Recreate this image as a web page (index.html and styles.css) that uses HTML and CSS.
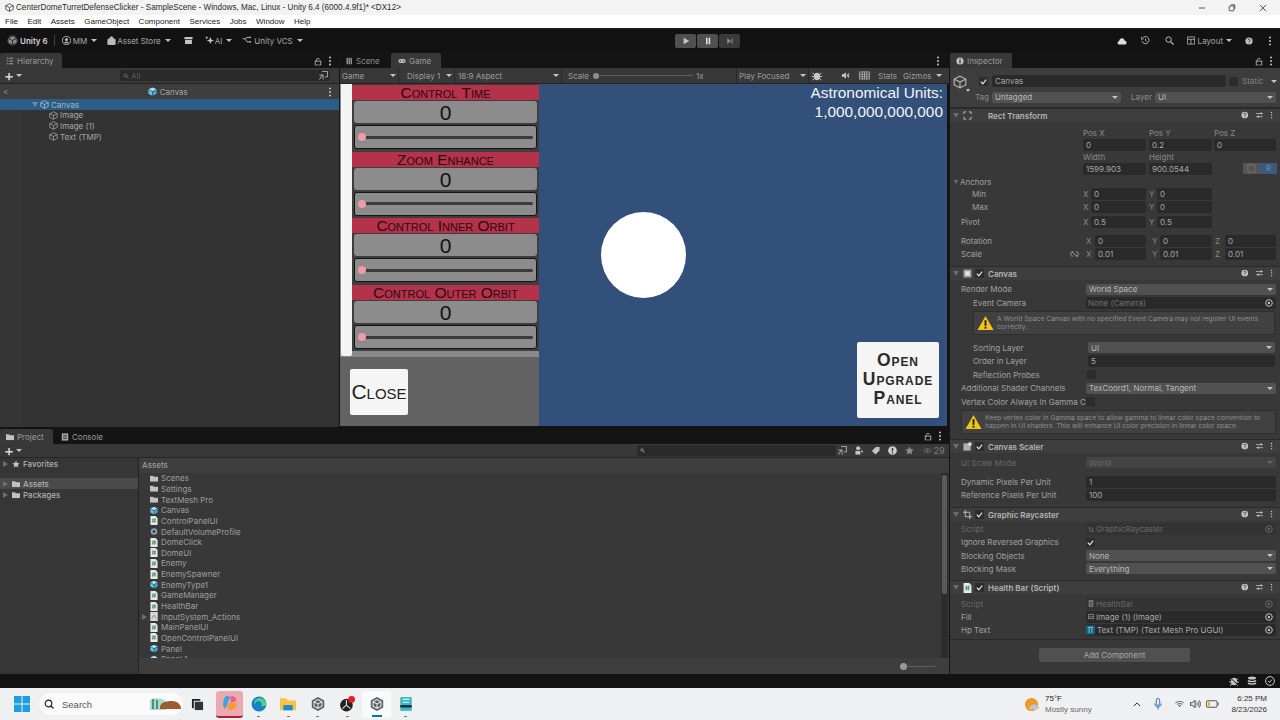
FILE: index.html
```html
<!DOCTYPE html>
<html>
<head>
    <meta charset="UTF-8">
    <title>CenterDomeTurretDefenseClicker - SampleScene</title>
    <link rel="stylesheet" href="styles.css">
</head>
<body>
    <svg class="defs" width="0" height="0">
        <defs>
            <symbol id="cube" viewBox="0 0 12 12"><path d="M6 1 11 3.500V8.500L6 11 1 8.500V3.500ZM1 3.500 6 6 11 3.500M6 6V11" fill="none" stroke="currentColor" stroke-width="1"/></symbol>
            <symbol id="prefab" viewBox="0 0 12 12"><path d="M6 .5 11.500 3 6 5.600.5 3Z" fill="#a8e0f5"/><path d="M.5 3.800 5.600 6.300V11.700L.5 9Z" fill="#5fc3e8"/><path d="M11.500 3.800 6.400 6.300V11.700L11.500 9Z" fill="#3ba7d2"/></symbol>
            <symbol id="folder" viewBox="0 0 12 10"><path d="M0 1h4.500l1 1.500H12V10H0Z" fill="#c2c2c2"/></symbol>
            <symbol id="script" viewBox="0 0 10 12"><path d="M0 0H7L10 3V12H0Z" fill="#e8e8e8"/><path d="M4 3 3.300 9M6.600 3 6 9M2.400 5H7.600M2.200 7H7.400" stroke="#3f8a55" stroke-width="1" fill="none"/></symbol>
            <symbol id="help" viewBox="0 0 10 10"><circle cx="5" cy="5" r="4.500" fill="#c4c4c4"/><path d="M3.400 4C3.400 2 6.800 2.200 6.600 4 6.500 5 5 5 5 6.300" fill="none" stroke="#333" stroke-width="1.100"/><rect x="4.500" y="7" width="1" height="1.200" fill="#333"/></symbol>
            <symbol id="sliders" viewBox="0 0 10 10"><path d="M0 3H10M0 7.200H10" stroke="#c4c4c4"/><rect x="6" y="1.500" width="1.500" height="3" fill="#c4c4c4"/><rect x="2.500" y="5.700" width="1.500" height="3" fill="#c4c4c4"/></symbol>
            <symbol id="kebab" viewBox="0 0 4 10"><circle cx="2" cy="1.500" r="1" fill="#c4c4c4"/><circle cx="2" cy="5" r="1" fill="#c4c4c4"/><circle cx="2" cy="8.500" r="1" fill="#c4c4c4"/></symbol>
            <symbol id="lock" viewBox="0 0 10 10"><path d="M3 4.500V2.500C3 .8 7 .8 7 2.500" fill="none" stroke="#c4c4c4"/><rect x="1.500" y="4.500" width="7" height="5" fill="none" stroke="#c4c4c4"/></symbol>
            <symbol id="warn" viewBox="0 0 18 16"><path d="M9 .5 17.500 15.500H.5Z" fill="#f0c419"/><rect x="8" y="5" width="2" height="6" fill="#222"/><rect x="8" y="12" width="2" height="2" fill="#222"/></symbol>
            <symbol id="target" viewBox="0 0 8 8"><circle cx="4" cy="4" r="3.300" fill="none" stroke="currentColor"/><circle cx="4" cy="4" r="1.200" fill="currentColor"/></symbol>
            <symbol id="tick" viewBox="0 0 10 10"><path d="M2 5.200 4.200 7.500 8 2.800" fill="none" stroke="#e4e4e4" stroke-width="1.300"/></symbol>
            <symbol id="raycast" viewBox="0 0 10 10"><path d="M2.500 0V7.500H10M0 2.500H7.500V10" fill="none" stroke="currentColor"/></symbol>
            <symbol id="unity-hex" viewBox="0 0 18 18"><path d="M9 1 16 5V13L9 17 2 13V5Z" fill="#5a5f63"/><path d="M9 4 13.500 6.500V11.500L9 14 4.500 11.500V6.500ZM4.500 6.500 9 9 13.500 6.500M9 9V14" fill="none" stroke="#e4e4e4" stroke-width="1.200"/></symbol>
        </defs>
    </svg>

    <header class="titlebar">
        <svg class="title-icon" viewBox="0 0 12 12"><use href="#cube"/></svg>
        <span class="title-text">CenterDomeTurretDefenseClicker - SampleScene - Windows, Mac, Linux - Unity 6.4 (6000.4.9f1)* &lt;DX12&gt;</span>
        <div class="window-buttons">
            <svg viewBox="0 0 10 10"><path d="M1 5H9" stroke="#333"/></svg>
            <svg viewBox="0 0 10 10"><rect x="1.500" y="2.500" width="6" height="6" rx="1" fill="none" stroke="#333"/><path d="M3.500 1H8.500V6" fill="none" stroke="#333"/></svg>
            <svg viewBox="0 0 10 10"><path d="M1 1 9 9M9 1 1 9" stroke="#333"/></svg>
        </div>
    </header>

    <nav class="menubar">
        <span>File</span><span>Edit</span><span>Assets</span><span>GameObject</span><span>Component</span><span>Services</span><span>Jobs</span><span>Window</span><span>Help</span>
    </nav>

    <div class="toolbar">
        <div class="toolbar-left">
            <svg class="tb-logo" viewBox="0 0 12 12"><circle cx="6" cy="6" r="5.500" fill="#8a8a8a"/><use href="#cube" color="#222"/></svg>
            <b class="tb-unity">Unity 6</b>
            <span class="tb-sep"></span>
            <svg class="tb-icon" viewBox="0 0 10 10"><circle cx="5" cy="5" r="4.500" fill="none" stroke="#bbb"/><circle cx="5" cy="4" r="1.700" fill="#bbb"/><path d="M2 8C3 6 7 6 8 8" fill="#bbb"/></svg>
            <span class="tb-item tb-mm">MM<i class="caret"></i></span>
            <svg class="tb-icon tb-store" viewBox="0 0 10 10"><path d="M1 3.500H9V9.500H1ZM3 3.500C3 0 7 0 7 3.500" fill="#bbb" stroke="#bbb"/></svg>
            <span class="tb-item">Asset Store<i class="caret"></i></span>
            <svg class="tb-icon tb-box" viewBox="0 0 10 10"><path d="M.5 1H9.500V3.500H.5ZM1.200 4.500H8.800V9H1.200Z" fill="#c4c4c4"/></svg>
            <svg class="tb-icon tb-ai" viewBox="0 0 10 10"><path d="M6 1 7 4 10 5 7 6 6 9 5 6 2 5 5 4ZM2 0 2.500 1.500 4 2 2.500 2.500 2 4 1.500 2.500 0 2 1.500 1.500Z" fill="#c4c4c4"/></svg>
            <span class="tb-item">AI<i class="caret"></i></span>
            <svg class="tb-icon tb-vcs" viewBox="0 0 10 10"><path d="M0 3H3L5 1.500H8M3 3 5 6.500H8" fill="none" stroke="#bbb"/><circle cx="8.500" cy="1.500" r="1" fill="#bbb"/><circle cx="8.500" cy="6.500" r="1" fill="#bbb"/></svg>
            <span class="tb-item">Unity VCS<i class="caret"></i></span>
        </div>
        <div class="play-buttons">
            <button class="play-btn play-on"><svg viewBox="0 0 10 10"><path d="M2 1 9 5 2 9Z" fill="#c8c8c8"/></svg></button>
            <button class="play-btn play-on"><svg viewBox="0 0 10 10"><path d="M2.500 1H4.500V9H2.500ZM5.800 1H7.800V9H5.800Z" fill="#dedede"/></svg></button>
            <button class="play-btn play-off"><svg viewBox="0 0 10 10"><path d="M1.500 1.500 6.500 5 1.500 8.500ZM7 1.500H8.300V8.500H7Z" fill="#8c8c8c"/></svg></button>
        </div>
        <div class="toolbar-right">
            <svg class="tr-cloud" viewBox="0 0 10 8"><path d="M2.300 7.500C0 7.500 0 4.500 2 4.300 2.500 .5 7 .5 7.500 3.500 10 3.500 10.200 7.500 7.800 7.500Z" fill="#dcdcdc"/></svg>
            <svg class="tr-history" viewBox="0 0 10 10"><path d="M1.500 2.500A4 4 0 1 1 1 5.500M5 2.800V5.200L6.500 6.200" fill="none" stroke="#bbb"/><path d="M.3 1V3.500H2.800" fill="none" stroke="#bbb"/></svg>
            <svg class="tr-search" viewBox="0 0 10 10"><circle cx="4" cy="4" r="3" fill="none" stroke="#c8c8c8"/><path d="M6.200 6.200 9.500 9.500" stroke="#c8c8c8" stroke-width="1.300"/></svg>
            <span class="tb-layout"><svg class="tb-icon" viewBox="0 0 10 10"><path d="M.5.5H9.500V9.500H.5ZM.5 3.500H9.500M5 3.500V9.500" fill="none" stroke="#bbb"/></svg>Layout<i class="caret"></i></span>
            <svg class="tr-help" viewBox="0 0 10 10"><use href="#help"/></svg>
            <svg class="tb-kebab" viewBox="0 0 4 10"><use href="#kebab"/></svg>
        </div>
    </div>

    <div class="workspace">
        <div class="main-area">
            <div class="top-row">
                <section class="hierarchy">
                    <div class="tabbar">
                        <div class="tab tab-on hier-tab"><svg class="tab-icon" viewBox="0 0 10 10"><path d="M1 1.500H3M4 1.500H9M1 5H3M4 5H9M1 8.500H3M4 8.500H9" stroke="#aaa" stroke-width="1.200"/></svg>Hierarchy</div>
                        <div class="tab-tools"><svg viewBox="0 0 10 10"><use href="#lock"/></svg><svg class="kebab" viewBox="0 0 4 10"><use href="#kebab"/></svg></div>
                    </div>
                    <div class="subbar">
                        <span class="plus">+<i class="caret"></i></span>
                        <div class="hier-search">
                            <svg class="search-glass" viewBox="0 0 10 10"><circle cx="4" cy="4" r="2.500" fill="none" stroke="#888"/><path d="M6 6 9 9" stroke="#888" stroke-width="1.300"/></svg>
                            <span>All</span>
                            <svg class="search-save" viewBox="0 0 10 10"><path d="M3.500.5H9.500V6.500H6.500M4 4 .5 9.500M.5 4.500H4.500V9.500" fill="none" stroke="#b4b4b4"/></svg>
                        </div>
                    </div>
                    <div class="scene-head">
                        <span class="back">&lt;</span>
                        <span class="scene-name"><svg viewBox="0 0 12 12"><use href="#prefab"/></svg>Canvas</span>
                        <svg class="kebab" viewBox="0 0 4 10"><use href="#kebab"/></svg>
                    </div>
                    <ul class="tree">
                        <li class="tree-row selected"><i class="arrow-down"></i><svg viewBox="0 0 12 12"><use href="#cube"/></svg>Canvas</li>
                        <li class="tree-row child"><svg viewBox="0 0 12 12"><use href="#cube"/></svg>Image</li>
                        <li class="tree-row child"><svg viewBox="0 0 12 12"><use href="#cube"/></svg>Image (1)</li>
                        <li class="tree-row child"><svg viewBox="0 0 12 12"><use href="#cube"/></svg>Text (TMP)</li>
                    </ul>
                </section>

                <section class="game">
                    <div class="tabbar game-tabs">
                        <div class="tab scene-tab"><svg class="tab-icon" viewBox="0 0 10 10"><path d="M1.500 1V9M4 1V9M6.500 1V9" stroke="#aaa" stroke-width="1.500"/></svg>Scene</div>
                        <div class="tab tab-on game-tab"><svg class="tab-icon" viewBox="0 0 12 8"><rect x=".5" y="1" width="11" height="6" rx="3" fill="#bbb"/><circle cx="3.500" cy="4" r="1" fill="#333"/><circle cx="8.500" cy="4" r="1" fill="#333"/></svg>Game</div>
                        <div class="tab-tools"><svg class="kebab" viewBox="0 0 4 10"><use href="#kebab"/></svg></div>
                    </div>
                    <div class="game-bar">
                        <span class="gb gb-game">Game<i class="caret"></i></span>
                        <span class="gb gb-display">Display 1<i class="caret"></i></span>
                        <span class="gb gb-aspect">16:9 Aspect<i class="caret"></i></span>
                        <span class="gb gb-scale">Scale<i class="knob"></i><i class="gb-track"></i>1x</span>
                        <span class="gb gb-focus">Play Focused<i class="caret"></i></span>
                        <svg class="gb-bug" viewBox="0 0 10 10"><ellipse cx="5" cy="5.500" rx="3" ry="3.800" fill="#c8c8c8"/><path d="M.5 2 9.500 9M9.500 2 .5 9M0 5.500H10" stroke="#c8c8c8"/></svg>
                        <svg class="gb-audio" viewBox="0 0 10 10"><path d="M1 3.500H3L5.500 1.500V8.500L3 6.500H1Z" fill="#c8c8c8"/><path d="M7 3.500V6.500M8.500 2.500V7.500" stroke="#c8c8c8"/></svg>
                        <svg class="gb-keys" viewBox="0 0 12 10"><path d="M.5 1H11.500V9H.5ZM.5 3.700H11.500M.5 6.400H11.500M3.500 1V9M6 1V9M8.500 1V9" fill="none" stroke="#c0c0c0" stroke-width=".8"/></svg>
                        <span class="gb gb-stats">Stats</span>
                        <span class="gb gb-gizmos">Gizmos</span>
                        <i class="caret gb-last"></i>
                    </div>
                    <div class="game-view">
                        <aside class="control-panel">
                            <div class="control-list">
                                <div class="control-stack">
                                    <div class="control">
                                        <h3 class="control-title">Control Time</h3>
                                        <div class="control-value">0</div>
                                        <div class="control-slider"><i class="slider-track"></i><i class="slider-knob"></i></div>
                                    </div>
                                    <div class="control">
                                        <h3 class="control-title">Zoom Enhance</h3>
                                        <div class="control-value">0</div>
                                        <div class="control-slider"><i class="slider-track"></i><i class="slider-knob"></i></div>
                                    </div>
                                    <div class="control">
                                        <h3 class="control-title">Control Inner Orbit</h3>
                                        <div class="control-value">0</div>
                                        <div class="control-slider"><i class="slider-track"></i><i class="slider-knob"></i></div>
                                    </div>
                                    <div class="control">
                                        <h3 class="control-title">Control Outer Orbit</h3>
                                        <div class="control-value">0</div>
                                        <div class="control-slider"><i class="slider-track"></i><i class="slider-knob"></i></div>
                                    </div>
                                </div>
                            </div>
                            <div class="panel-foot"><div class="close-btn">Close</div></div>
                        </aside>
                        <div class="game-canvas">
                            <div class="units">Astronomical Units:<br>1,000,000,000,000</div>
                            <div class="dome"></div>
                            <div class="open-btn">Open<br>Upgrade<br>Panel</div>
                        </div>
                    </div>
                </section>
            </div>

            <section class="project">
                <div class="tabbar project-tabs">
                    <div class="tab tab-on project-tab"><svg class="tab-icon" viewBox="0 0 12 10"><use href="#folder"/></svg>Project</div>
                    <div class="tab console-tab"><svg class="tab-icon" viewBox="0 0 10 10"><rect x="1" y=".5" width="8" height="9" fill="#aaa"/><path d="M2.500 3H7.500M2.500 5H7.500M2.500 7H7.500" stroke="#333"/></svg>Console</div>
                    <div class="tab-tools"><svg viewBox="0 0 10 10"><use href="#lock"/></svg><svg class="kebab" viewBox="0 0 4 10"><use href="#kebab"/></svg></div>
                </div>
                <div class="subbar project-bar">
                    <span class="plus">+<i class="caret"></i></span>
                    <div class="project-search"><svg viewBox="0 0 10 10"><circle cx="4" cy="4" r="2.500" fill="none" stroke="#ccc"/><path d="M6 6 9 9" stroke="#ccc" stroke-width="1.300"/></svg></div>
                    <div class="project-tools">
                        <svg viewBox="0 0 10 10"><path d="M3.500.5H9.500V6.500H6.500M4 4 .5 9.500M.5 4.500H4.500V9.500" fill="none" stroke="#b4b4b4"/></svg>
                        <svg viewBox="0 0 10 10"><circle cx="3.500" cy="2.500" r="2.300" fill="#c4c4c4"/><path d="M.5 5.500H6V9.500H.5Z" fill="#c4c4c4"/><path d="M7 4 9.500 7H7Z" fill="#c4c4c4"/></svg>
                        <svg viewBox="0 0 10 10"><path d="M5.500 1H9.500V5L5 9.500 1 5.500Z" fill="#c4c4c4"/></svg>
                        <svg viewBox="0 0 10 10"><circle cx="5" cy="5" r="4.800" fill="#d0d0d0"/><rect x="4.200" y="2" width="1.600" height="4" fill="#383838"/><rect x="4.200" y="6.800" width="1.600" height="1.500" fill="#383838"/></svg>
                        <svg viewBox="0 0 10 10"><path d="M5 .5 6.400 3.600 9.700 4 7.200 6.200 7.900 9.500 5 7.800 2.100 9.500 2.800 6.200.3 4 3.600 3.600Z" fill="#8e8e8e"/></svg>
                        <span class="hidden-count"><svg viewBox="0 0 12 8"><path d="M.5 4C3 .5 9 .5 11.500 4 9 7.500 3 7.500 .5 4Z" fill="none" stroke="#777"/><circle cx="6" cy="4" r="1.500" fill="#777"/></svg>29</span>
                    </div>
                </div>
                <div class="project-body">
                    <div class="folders">
                        <div class="folder-row fav"><i class="arrow-right"></i><svg viewBox="0 0 10 10"><path d="M5 .5 6.400 3.600 9.700 4 7.200 6.200 7.900 9.500 5 7.800 2.100 9.500 2.800 6.200.3 4 3.600 3.600Z" fill="#c2c2c2"/></svg>Favorites</div>
                        <div class="folder-row on"><i class="arrow-right"></i><svg viewBox="0 0 12 10"><use href="#folder"/></svg>Assets</div>
                        <div class="folder-row"><i class="arrow-right"></i><svg viewBox="0 0 12 10"><use href="#folder"/></svg>Packages</div>
                    </div>
                    <div class="assets">
                        <div class="assets-head">Assets</div>
                        <div class="assets-scroll">
                            <ul class="asset-list">
                                <li><svg viewBox="0 0 12 10"><use href="#folder"/></svg>Scenes</li>
                                <li><svg viewBox="0 0 12 10"><use href="#folder"/></svg>Settings</li>
                                <li><svg viewBox="0 0 12 10"><use href="#folder"/></svg>TextMesh Pro</li>
                                <li><svg viewBox="0 0 12 12"><use href="#prefab"/></svg>Canvas</li>
                                <li><svg viewBox="0 0 10 12"><use href="#script"/></svg>ControlPanelUI</li>
                                <li><svg viewBox="0 0 12 12"><circle cx="6" cy="6" r="5" fill="#8aa0b8"/><circle cx="6" cy="6" r="2" fill="#333"/></svg>DefaultVolumeProfile</li>
                                <li><svg viewBox="0 0 10 12"><use href="#script"/></svg>DomeClick</li>
                                <li><svg viewBox="0 0 10 12"><use href="#script"/></svg>DomeUI</li>
                                <li><svg viewBox="0 0 10 12"><use href="#script"/></svg>Enemy</li>
                                <li><svg viewBox="0 0 10 12"><use href="#script"/></svg>EnemySpawner</li>
                                <li><svg viewBox="0 0 12 12"><use href="#prefab"/></svg>EnemyType1</li>
                                <li><svg viewBox="0 0 10 12"><use href="#script"/></svg>GameManager</li>
                                <li><svg viewBox="0 0 10 12"><use href="#script"/></svg>HealthBar</li>
                                <li class="has-arrow"><i class="arrow-right"></i><svg viewBox="0 0 10 12"><path d="M0 0H10V12H0Z" fill="#d8d8d8"/><path d="M2 9 5 4 8 9" fill="none" stroke="#4a8a5a"/></svg>InputSystem_Actions</li>
                                <li><svg viewBox="0 0 10 12"><use href="#script"/></svg>MainPanelUI</li>
                                <li><svg viewBox="0 0 10 12"><use href="#script"/></svg>OpenControlPanelUI</li>
                                <li><svg viewBox="0 0 12 12"><use href="#prefab"/></svg>Panel</li>
                                <li><svg viewBox="0 0 12 12"><use href="#prefab"/></svg>Panel 1</li>
                            </ul>
                            <div class="scrollbar"><i class="scroll-thumb"></i></div>
                        </div>
                        <div class="assets-foot"><i class="foot-knob"></i><i class="foot-track"></i></div>
                    </div>
                </div>
            </section>
        </div>

        <section class="inspector">
            <div class="tabbar">
                <div class="tab tab-on insp-tab"><svg class="tab-icon" viewBox="0 0 10 10"><circle cx="5" cy="5" r="4.500" fill="#c4c4c4"/><rect x="4.200" y="4" width="1.600" height="4" fill="#333"/><rect x="4.200" y="2" width="1.600" height="1.400" fill="#333"/></svg>Inspector</div>
                <div class="tab-tools"><svg viewBox="0 0 10 10"><use href="#lock"/></svg><svg class="kebab" viewBox="0 0 4 10"><use href="#kebab"/></svg></div>
            </div>

            <div class="object-head">
                <div class="object-icon"><svg viewBox="0 0 12 12"><use href="#cube"/></svg><i class="caret"></i></div>
                <div class="object-rows">
                    <div class="object-row">
                        <span class="check"><svg viewBox="0 0 10 10"><use href="#tick"/></svg></span>
                        <span class="field name-field">Canvas</span>
                        <span class="check static-check"></span>
                        <span class="static-label">Static</span>
                        <i class="caret"></i>
                    </div>
                    <div class="object-row tag-row">
                        <span class="tag-label">Tag</span>
                        <span class="drop tag-drop">Untagged<i class="caret"></i></span>
                        <span class="layer-label">Layer</span>
                        <span class="drop layer-drop">UI<i class="caret"></i></span>
                    </div>
                </div>
            </div>

            <div class="comp-head">
                <i class="arrow-down"></i>
                <svg class="comp-icon" viewBox="0 0 10 10"><path d="M1 3.500V1H3.500M6.500 1H9V3.500M9 6.500V9H6.500M3.500 9H1V6.500" fill="none" stroke="#c4c4c4"/></svg>
                <span class="no-check"></span>
                <b>Rect Transform</b>
                <span class="comp-tools"><svg viewBox="0 0 10 10"><use href="#help"/></svg><svg viewBox="0 0 10 10"><use href="#sliders"/></svg><svg class="kebab" viewBox="0 0 4 10"><use href="#kebab"/></svg></span>
            </div>
            <div class="comp-body rect-body">
                <div class="row"><span class="triple"><span>Pos X</span><span>Pos Y</span><span>Pos Z</span></span></div>
                <div class="row"><span class="triple"><span class="field">0</span><span class="field">0.2</span><span class="field">0</span></span></div>
                <div class="row"><span class="triple"><span>Width</span><span>Height</span></span></div>
                <div class="row">
                    <span class="triple"><span class="field">1599.903</span><span class="field">900.0544</span>
                        <span class="rbtn-wrap"><i class="rbtn"><svg viewBox="0 0 10 10"><rect x="1" y="1" width="8" height="8" fill="none" stroke="#888" stroke-dasharray="1.500 1"/></svg></i><i class="rbtn rbtn-on">R</i></span>
                    </span>
                </div>
                <div class="row row-anchors"><i class="arrow-down"></i><span>Anchors</span></div>
                <div class="row row-tall"><span class="label indent">Min</span><span class="pair"><span class="axis">X</span><span class="field">0</span><span class="axis">Y</span><span class="field">0</span></span></div>
                <div class="row row-tall"><span class="label indent">Max</span><span class="pair"><span class="axis">X</span><span class="field">0</span><span class="axis">Y</span><span class="field">0</span></span></div>
                <div class="row row-pivot"><span class="label">Pivot</span><span class="pair"><span class="axis">X</span><span class="field">0.5</span><span class="axis">Y</span><span class="field">0.5</span></span></div>
                <div class="row row-tall row-rotation"><span class="label">Rotation</span><span class="trio"><span class="axis">X</span><span class="field">0</span><span class="axis">Y</span><span class="field">0</span><span class="axis">Z</span><span class="field">0</span></span></div>
                <div class="row row-tall"><span class="label">Scale</span><svg class="link" viewBox="0 0 10 6"><path d="M3.500 .7H2.500C0 .7 0 5.300 2.500 5.300H3.500M6.500 .7H7.500C10 .7 10 5.300 7.500 5.300H6.500M2 .3 8 5.700" fill="none" stroke="#b0b0b0"/></svg><span class="trio"><span class="axis">X</span><span class="field">0.01</span><span class="axis">Y</span><span class="field">0.01</span><span class="axis">Z</span><span class="field">0.01</span></span></div>
            </div>

            <div class="comp-head">
                <i class="arrow-down"></i>
                <svg class="comp-icon" viewBox="0 0 10 10"><rect x=".5" y=".5" width="9" height="9" fill="#9a9a9a"/><rect x="2.500" y="2.500" width="5" height="5" fill="#e4e4e4"/></svg>
                <span class="check"><svg viewBox="0 0 10 10"><use href="#tick"/></svg></span>
                <b>Canvas</b>
                <span class="comp-tools"><svg viewBox="0 0 10 10"><use href="#help"/></svg><svg viewBox="0 0 10 10"><use href="#sliders"/></svg><svg class="kebab" viewBox="0 0 4 10"><use href="#kebab"/></svg></span>
            </div>
            <div class="comp-body canvas-body">
                <div class="row prop row-render"><span class="label">Render Mode</span><span class="drop">World Space<i class="caret"></i></span></div>
                <div class="row prop"><span class="label sub">Event Camera</span><span class="field obj dim">None (Camera)<svg class="target" viewBox="0 0 8 8"><use href="#target"/></svg></span></div>
                <div class="warning warning-sub"><svg viewBox="0 0 18 16"><use href="#warn"/></svg><p>A World Space Canvas with no specified Event Camera may not register UI events correctly.</p></div>
                <div class="row prop row-sorting"><span class="label sub">Sorting Layer</span><span class="drop narrow">UI<i class="caret"></i></span></div>
                <div class="row prop"><span class="label sub">Order in Layer</span><span class="field narrow">5</span></div>
                <div class="row prop"><span class="label sub">Reflection Probes</span><span class="check box-check"></span></div>
                <div class="row prop"><span class="label">Additional Shader Channels</span><span class="drop">TexCoord1, Normal, Tangent<i class="caret"></i></span></div>
                <div class="row prop"><span class="label">Vertex Color Always In Gamma C</span><span class="check"></span></div>
                <div class="warning warning-main"><svg viewBox="0 0 18 16"><use href="#warn"/></svg><p>Keep vertex color in Gamma space to allow gamma to linear color space conversion to happen in UI shaders. This will enhance UI color precision in linear color space.</p></div>
            </div>

            <div class="comp-head">
                <i class="arrow-down"></i>
                <svg class="comp-icon" viewBox="0 0 10 10"><rect x=".5" y="1.500" width="8" height="8" fill="#b0b0b0"/><rect x="6" y=".5" width="3.500" height="3.500" fill="#e4e4e4"/></svg>
                <span class="check"><svg viewBox="0 0 10 10"><use href="#tick"/></svg></span>
                <b>Canvas Scaler</b>
                <span class="comp-tools"><svg viewBox="0 0 10 10"><use href="#help"/></svg><svg viewBox="0 0 10 10"><use href="#sliders"/></svg><svg class="kebab" viewBox="0 0 4 10"><use href="#kebab"/></svg></span>
            </div>
            <div class="comp-body scaler-body">
                <div class="row prop disabled"><span class="label">UI Scale Mode</span><span class="drop">World<i class="caret"></i></span></div>
                <div class="row prop row-dynamic"><span class="label">Dynamic Pixels Per Unit</span><span class="field">1</span></div>
                <div class="row prop"><span class="label">Reference Pixels Per Unit</span><span class="field">100</span></div>
            </div>

            <div class="comp-head">
                <i class="arrow-down"></i>
                <svg class="comp-icon" viewBox="0 0 10 10"><use href="#raycast" color="#c4c4c4"/></svg>
                <span class="check"><svg viewBox="0 0 10 10"><use href="#tick"/></svg></span>
                <b>Graphic Raycaster</b>
                <span class="comp-tools"><svg viewBox="0 0 10 10"><use href="#help"/></svg><svg viewBox="0 0 10 10"><use href="#sliders"/></svg><svg class="kebab" viewBox="0 0 4 10"><use href="#kebab"/></svg></span>
            </div>
            <div class="comp-body ray-body">
                <div class="row prop disabled row-short"><span class="label">Script</span><span class="field obj"><svg class="field-icon" viewBox="0 0 10 10"><use href="#raycast" color="#777"/></svg>GraphicRaycaster<svg class="target" viewBox="0 0 8 8"><use href="#target"/></svg></span></div>
                <div class="row prop row-ignore"><span class="label">Ignore Reversed Graphics</span><span class="check"><svg viewBox="0 0 10 10"><use href="#tick"/></svg></span></div>
                <div class="row prop"><span class="label">Blocking Objects</span><span class="drop">None<i class="caret"></i></span></div>
                <div class="row prop"><span class="label">Blocking Mask</span><span class="drop">Everything<i class="caret"></i></span></div>
            </div>

            <div class="comp-head">
                <i class="arrow-down"></i>
                <svg class="comp-icon script-icon" viewBox="0 0 10 12"><use href="#script"/></svg>
                <span class="check"><svg viewBox="0 0 10 10"><use href="#tick"/></svg></span>
                <b>Health Bar (Script)</b>
                <span class="comp-tools"><svg viewBox="0 0 10 10"><use href="#help"/></svg><svg viewBox="0 0 10 10"><use href="#sliders"/></svg><svg class="kebab" viewBox="0 0 4 10"><use href="#kebab"/></svg></span>
            </div>
            <div class="comp-body bar-body">
                <div class="row prop disabled"><span class="label">Script</span><span class="field obj"><svg class="field-icon" viewBox="0 0 10 12"><path d="M1 0H9V12H1Z" fill="#777"/><path d="M3 4H7M3 6.500H7M3 9H7" stroke="#333"/></svg>HealthBar<svg class="target" viewBox="0 0 8 8"><use href="#target"/></svg></span></div>
                <div class="row prop"><span class="label">Fill</span><span class="field obj"><svg class="field-icon" viewBox="0 0 10 10"><path d="M.5 1.500H9.500V8.500H.5ZM.5 7 4 4 6 6 7.500 5 9.500 7" fill="none" stroke="#b8b8b8"/></svg>Image (1) (Image)<svg class="target" viewBox="0 0 8 8"><use href="#target"/></svg></span></div>
                <div class="row prop"><span class="label">Hp Text</span><span class="field obj tmp-field"><svg class="tmp-icon" viewBox="0 0 10 10"><rect width="10" height="10" fill="#16617c"/><path d="M2 2H8M3.500 2V8.500M6.500 2V8.500" stroke="#7fd0ea"/></svg>Text (TMP) (Text Mesh Pro UGUI)<svg class="target" viewBox="0 0 8 8"><use href="#target"/></svg></span></div>
            </div>
            <div class="add-comp-wrap"><div class="add-comp">Add Component</div></div>
        </section>
    </div>

    <footer class="statusbar">
        <svg viewBox="0 0 10 10"><ellipse cx="5" cy="5.500" rx="3" ry="3.800" fill="#c8c8c8"/><path d="M1 2.500 3 4M9 2.500 7 4M0 6H2M10 6H8M1 9.500 3 8M9 9.500 7 8" stroke="#c8c8c8"/><path d="M.5 1 9.500 9.500" stroke="#111" stroke-width="1"/></svg>
        <svg viewBox="0 0 10 10"><ellipse cx="5" cy="2" rx="4" ry="1.500" fill="#c8c8c8"/><path d="M1 4.500C2 6 8 6 9 4.500M1 7C2 8.500 8 8.500 9 7" fill="none" stroke="#c8c8c8" stroke-width="1.400"/></svg>
        <svg viewBox="0 0 10 10"><circle cx="5" cy="5" r="4.400" fill="none" stroke="#c8c8c8"/><path d="M3 5 4.500 6.500 7 3.500" fill="none" stroke="#c8c8c8"/></svg>
    </footer>

    <div class="taskbar">
        <div class="task-left">
            <svg class="win-logo" viewBox="0 0 16 16"><path d="M0 0H7.500V7.500H0ZM8.500 0H16V7.500H8.500ZM0 8.500H7.500V16H0ZM8.500 8.500H16V16H8.500Z" fill="#1d9fe0"/></svg>
            <div class="search-pill">
                <svg viewBox="0 0 10 10"><circle cx="4.500" cy="4.500" r="3.300" fill="none" stroke="#222" stroke-width="1.200"/><path d="M7 7 9.500 9.500" stroke="#222" stroke-width="1.200"/></svg>
                <span>Search</span>
                <svg class="search-art" viewBox="0 0 32 14"><path d="M0 3C4 0 12 1 16 4V13H0Z" fill="#a8dccf"/><path d="M2 2H4V12H2ZM6 3H8V12H6Z" fill="#4c8f7c"/><path d="M10 12C9 6 15 4 22 4 28 4 31 8 31 12Z" fill="#9a5c30"/></svg>
            </div>
            <div class="task-icons">
                <span class="task-slot task-view"><svg viewBox="0 0 14 14"><path d="M1 1H10V3H3V11H1Z" fill="#222"/><path d="M4 4H13V13H4Z" fill="#333"/></svg></span>
                <span class="task-slot active"><svg viewBox="0 0 14 14"><path d="M2 3C3 0 6 0 7 2L5 7 3 12C0 10 1 6 2 3Z" fill="#3aa0e8"/><path d="M7 2C9 0 13 2 12.500 5L8 7Z" fill="#e8608c"/><path d="M5 7H12.500C13.500 11 10 14 7 13 4 13 5 9 5 7Z" fill="#f0a030"/></svg></span>
                <span class="task-slot running"><svg viewBox="0 0 14 14"><circle cx="7" cy="7" r="6.500" fill="#1680c8"/><path d="M13.500 7.500C13 3 9 1 6 2 3 3 2 6 4 8 3 5 6 4 8 5 10 6 9 8 9 9 11 9 13 9 13.500 7.500Z" fill="#4ed08a"/></svg></span>
                <span class="task-slot running"><svg viewBox="0 0 14 14"><path d="M0 2H5.500L7 4H14V12.500H0Z" fill="#f6c445"/><path d="M3 8H11V12.500H3Z" fill="#1c86d6"/></svg></span>
                <span class="task-slot running"><svg viewBox="0 0 18 18"><use href="#unity-hex"/></svg></span>
                <span class="task-slot running"><svg viewBox="0 0 14 14"><circle cx="6.500" cy="8" r="5.500" fill="#222"/><path d="M6.500 8 6.500 3.500M6.500 8 3 11M6.500 8 10 11" stroke="#ddd"/><circle cx="11" cy="3" r="3" fill="#e0202c"/></svg></span>
                <span class="task-slot focused"><svg viewBox="0 0 18 18"><use href="#unity-hex"/></svg></span>
                <span class="task-slot running"><svg viewBox="0 0 14 14"><path d="M2 1H12V13H2Z" fill="#35b8c4"/><path d="M2 8H12V10H2Z" fill="#222"/><path d="M4 3H10M4 5.500H10" stroke="#d8f4f6"/></svg></span>
            </div>
        </div>
        <div class="task-right">
            <svg class="weather" viewBox="0 0 16 16"><circle cx="7" cy="8" r="7" fill="#f0982c"/><path d="M6 13C4 13 4 10 6 10 7 7 12 7 12.500 9.500 16 9 16 13 13 13Z" fill="#b8c8dc"/></svg>
            <div class="weather-text"><span>75°F</span><span class="muted">Mostly sunny</span></div>
            <svg class="tray-up" viewBox="0 0 10 6"><path d="M1 5 5 1 9 5" fill="none" stroke="#222" stroke-width="1.200"/></svg>
            <svg class="tray-mic" viewBox="0 0 8 12"><rect x="2.300" y=".5" width="3.400" height="7" rx="1.700" fill="none" stroke="#3a70b8"/><path d="M.7 5.500C.7 10 7.300 10 7.300 5.500M4 9V11.500" fill="none" stroke="#3a70b8"/></svg>
            <svg class="tray-wifi" viewBox="0 0 12 8"><path d="M.5 2.500C3.500 0 8.500 0 11.500 2.500M2.500 4.500C4.500 3 7.500 3 9.500 4.500M4.300 6.200C5.300 5.500 6.700 5.500 7.700 6.200" fill="none" stroke="#333"/><circle cx="6" cy="7.300" r=".7" fill="#333"/></svg>
            <svg class="tray-vol" viewBox="0 0 12 10"><path d="M.5 3.500H2.500L5.500 1V9L2.500 6.500H.5Z" fill="none" stroke="#333"/><path d="M7 3.500C7.800 4.500 7.800 5.500 7 6.500M8.500 2C10 4 10 6 8.500 8M10 1C11.800 3.500 11.800 6.500 10 9" fill="none" stroke="#333" stroke-width=".8"/></svg>
            <svg class="tray-batt" viewBox="0 0 14 8"><rect x=".5" y=".5" width="11.500" height="7" rx="1.500" fill="none" stroke="#444"/><rect x="2" y="2" width="2.500" height="4" fill="#e8b030"/><rect x="12.500" y="2.500" width="1" height="3" fill="#444"/></svg>
            <div class="clock"><span>6:25 PM</span><span>8/23/2026</span></div>
        </div>
    </div>
</body>
</html>
```

FILE: styles.css
```css
* {
    box-sizing: border-box;
}

html, body {
    margin: 0;
    width: 1280px;
    height: 720px;
    overflow: hidden;
}

body {
    font-family: Inter, "Liberation Sans", sans-serif;
    font-size: 8px;
    color: #b4b4b4;
    background: #141414;
    display: flex;
    flex-direction: column;
}

.defs {
    position: absolute;
}

svg {
    display: block;
    flex: none;
}

ul {
    list-style: none;
    margin: 0;
    padding: 0;
}

i {
    display: block;
    flex: none;
}

.caret {
    display: inline-block;
    width: 0;
    height: 0;
    border-left: 3px solid transparent;
    border-right: 3px solid transparent;
    border-top: 3.500px solid #c4c4c4;
}

.arrow-down {
    width: 0;
    height: 0;
    border-left: 3.500px solid transparent;
    border-right: 3.500px solid transparent;
    border-top: 5px solid #6d6d6d;
}

.arrow-right {
    width: 0;
    height: 0;
    border-top: 3.500px solid transparent;
    border-bottom: 3.500px solid transparent;
    border-left: 5px solid #6d6d6d;
}

.kebab {
    width: 4px;
    height: 10px;
}

/* window chrome */
.titlebar {
    height: 15px;
    background: #f3f3f3;
    display: flex;
    align-items: center;
    padding-left: 5px;
    font-family: "Liberation Sans", sans-serif;
    font-size: 8.150px;
    color: #2a2a2a;
}

.title-icon {
    width: 9px;
    height: 9px;
    color: #333;
    margin-right: 2px;
}

.window-buttons {
    margin-left: auto;
    display: flex;
    gap: 22.700px;
    padding-right: 13px;
}

.window-buttons svg {
    width: 8px;
    height: 8px;
}

.menubar {
    height: 14px;
    background: #fff;
    border-bottom: 1px solid #222;
    display: flex;
    align-items: center;
    padding-left: 5px;
    gap: 9.500px;
    font-family: "Liberation Sans", sans-serif;
    font-size: 8px;
    color: #222;
}

.toolbar {
    height: 23px;
    background: #121212;
    display: flex;
    align-items: center;
    position: relative;
    color: #a8a8a8;
}

.toolbar-left {
    display: flex;
    align-items: center;
    padding-left: 7px;
}

.tb-logo {
    width: 11px;
    height: 11px;
    margin-right: 2px;
}

.tb-unity {
    color: #d4d4d4;
    font-weight: 600;
}

.tb-sep {
    width: 1px;
    height: 11px;
    background: #444;
    margin: 0 7px 0 6px;
}

.tb-icon {
    width: 9px;
    height: 9px;
    margin-right: 2px;
}

.tb-item {
    display: flex;
    align-items: center;
}

.tb-item .caret {
    margin-left: 4px;
}

.tb-store {
    margin: 0 1px 0 10px;
}

.tb-box {
    margin: 0 0 0 13px;
}

.tb-ai {
    margin: 0 1px 0 12px;
}

.tb-vcs {
    margin: 0 2px 0 10px;
    width: 10px;
}

.play-buttons {
    position: absolute;
    left: 675px;
    top: 5px;
    display: flex;
    gap: 1px;
}

.play-btn {
    width: 21px;
    height: 14px;
    padding: 0;
    border: 0;
    border-radius: 2px;
    background: #505050;
    display: flex;
    align-items: center;
    justify-content: center;
}

.play-btn svg {
    width: 8px;
    height: 8px;
}

.play-off {
    background: #3a3a3a;
}

.toolbar-right {
    margin-left: auto;
    display: flex;
    align-items: center;
    padding-right: 8px;
}

.tr-cloud {
    width: 10px;
    height: 8px;
    margin-right: 14px;
}

.tr-history {
    width: 9px;
    height: 9px;
    margin-right: 15px;
}

.tr-search {
    width: 9px;
    height: 9px;
    margin-right: 13px;
}

.tb-layout {
    display: flex;
    align-items: center;
    margin-right: 13px;
}

.tb-layout .tb-icon {
    width: 8px;
    height: 9px;
    margin-right: 3px;
}

.tb-layout .caret {
    margin-left: 3px;
}

.tr-help {
    width: 8px;
    height: 8px;
    margin-right: 15px;
}

.tb-kebab {
    width: 4px;
    height: 10px;
}

/* panels */
.workspace {
    height: 622px;
    display: flex;
}

.main-area {
    width: 949px;
    display: flex;
    flex-direction: column;
}

.top-row {
    height: 375px;
    display: flex;
}

.tabbar {
    height: 16px;
    background: #141414;
    display: flex;
    align-items: flex-end;
    position: relative;
}

.tab {
    height: 15px;
    display: flex;
    align-items: center;
    padding-left: 6px;
    color: #9a9a9a;
}

.tab-on {
    background: #383838;
    border-radius: 2px 2px 0 0;
}

.tab-icon {
    width: 8px;
    height: 8px;
    margin-right: 3px;
}

.tab-tools {
    position: absolute;
    right: 7px;
    top: 4px;
    display: flex;
    align-items: center;
    gap: 6px;
}

.tab-tools svg:not(.kebab) {
    width: 8px;
    height: 9px;
}

.game-tabs .tab-tools {
    right: 9px;
}

.subbar {
    height: 16px;
    background: #383838;
    border-bottom: 1px solid #232323;
    display: flex;
    align-items: center;
}

.plus {
    display: flex;
    align-items: center;
    padding-left: 4px;
    font-size: 15px;
    line-height: 12px;
    color: #d8d8d8;
    font-weight: 500;
}

.plus .caret {
    margin-left: 2px;
}

/* hierarchy */
.hierarchy {
    width: 340px;
    background: #383838;
    border-right: 1px solid #161616;
    display: flex;
    flex-direction: column;
}

.hier-tab {
    width: 62px;
}

.hier-search {
    margin-left: auto;
    margin-right: 9px;
    width: 210px;
    height: 11px;
    background: #2a2a2a;
    border-radius: 2px;
    display: flex;
    align-items: center;
    padding: 0 2px 0 3px;
    color: #5c5c5c;
}

.search-glass {
    width: 6px;
    height: 6px;
    margin-right: 2px;
}

.search-save {
    width: 9px;
    height: 9px;
    margin-left: auto;
}

.scene-head {
    height: 15px;
    display: flex;
    align-items: center;
    justify-content: center;
    position: relative;
    background: #3d3d3d;
    color: #a0a0a0;
}

.scene-name {
    display: flex;
    align-items: center;
    gap: 2.500px;
    margin-right: 3px;
    color: #a8a8a8;
}

.scene-name svg {
    width: 9px;
    height: 9px;
}

.back {
    position: absolute;
    left: 3px;
}

.scene-head .kebab {
    position: absolute;
    right: 7px;
    top: 3px;
}

.tree {
    flex: 1;
    background: linear-gradient(to right, #353535 22px, #333 22px);
}

.tree-row {
    height: 10.670px;
    display: flex;
    align-items: center;
    color: #a6a6a6;
}

.tree-row svg {
    width: 9px;
    height: 9px;
    margin-right: 2px;
    color: #a6a6a6;
}

.tree-row.selected {
    height: 11px;
    background: #2c5d87;
    padding-left: 32px;
    color: #aab4bc;
}

.tree-row.selected .arrow-down {
    border-top-color: #6a8aa8;
    margin-right: 2px;
}

.tree-row.selected svg {
    color: #aacbe4;
}

.tree-row.child {
    padding-left: 49px;
}

/* game */
.game {
    width: 609px;
    display: flex;
    flex-direction: column;
    background: #141414;
}

.scene-tab {
    width: 51px;
    color: #8c8c8c;
}

.scene-tab .tab-icon {
    margin-right: 2px;
}

.game-tab {
    width: 50px;
    padding-left: 7px;
}

.game-bar {
    height: 16px;
    background: #383838;
    display: flex;
    align-items: center;
    color: #9c9c9c;
    position: relative;
    border-bottom: 1px solid #232323;
}

.gb {
    display: flex;
    align-items: center;
    height: 100%;
    flex: none;
    padding-left: 2px;
}

.gb .caret {
    margin-left: auto;
    margin-right: 2px;
}

.gb-game {
    width: 59px;
    border-right: 1px solid #282828;
}

.gb-display {
    width: 56px;
    padding-left: 8px;
    border-right: 1px solid #282828;
}

.gb-aspect {
    width: 107px;
    padding-left: 3px;
    border-right: 1px solid #282828;
}

.gb-scale {
    width: 175px;
    padding-left: 6px;
    border-right: 1px solid #282828;
}

.knob {
    width: 6px;
    height: 6px;
    border-radius: 50%;
    background: #8e8e8e;
    margin-left: 4px;
}

.gb-track {
    width: 94px;
    height: 1px;
    background: #5f5f5f;
    margin-right: 3px;
}

.gb-focus {
    width: 72px;
    padding-left: 2px;
    border-right: 1px solid #282828;
}

.gb-bug {
    width: 10px;
    height: 10px;
    margin: 0 9px 0 3px;
}

.gb-audio {
    width: 9px;
    height: 9px;
    margin-left: 10px;
}

.gb-keys {
    width: 11px;
    height: 9px;
    margin-left: 9px;
}

.gb-stats {
    margin-left: 6px;
}

.gb-gizmos {
    margin-left: 4px;
}

.gb-last {
    margin-left: 5px;
}

.game-view {
    height: 343px;
    margin-right: 2px;
    display: flex;
    background: #33507a;
    border-bottom: 1px solid #141414;
}

.control-panel {
    width: 199px;
    display: flex;
    flex-direction: column;
    background: #656565;
    border-radius: 0 0 2px 2px;
}

.control-list {
    height: 273px;
    background: #8a8a8a;
    padding-left: 4px;
    position: relative;
}

.control-list::before {
    content: "";
    position: absolute;
    left: 1px;
    top: 0;
    width: 11px;
    height: 272px;
    background: #f4f4f4;
    border-radius: 0 0 2px 2px;
}

.control-stack {
    margin-left: 8px;
    width: 187px;
    background: #3e3e3e;
    position: relative;
    padding-top: 1px;
    height: 267px;
}

.control {
    height: 66.700px;
}

.control-title {
    margin: 0;
    height: 15px;
    background: #b4324a;
    font-family: "Liberation Sans", sans-serif;
    font-weight: 400;
    font-variant: small-caps;
    font-size: 15.500px;
    line-height: 15px;
    text-align: center;
    color: #2c0a12;
    white-space: nowrap;
}

.control-value {
    height: 22px;
    margin: 1px 2px 2px;
    background: #8c8c8c;
    border-radius: 3px;
    text-align: center;
    font-family: "Liberation Sans", sans-serif;
    font-size: 21px;
    line-height: 23px;
    color: #111;
}

.control-slider {
    height: 24px;
    margin: 0 2px;
    background: #8c8c8c;
    border: 1px solid #141414;
    border-radius: 3px;
    display: flex;
    align-items: center;
    position: relative;
}

.slider-track {
    width: 170px;
    height: 3px;
    margin-left: 8px;
    background: #3c3c3c;
    border-radius: 2px;
}

.slider-knob {
    position: absolute;
    left: 3px;
    top: 7px;
    width: 8px;
    height: 8px;
    border-radius: 50%;
    background: #ee9aa8;
}

.panel-foot {
    flex: 1;
    background: #636363;
    padding: 12px 0 0 10px;
}

.close-btn {
    width: 58px;
    height: 46px;
    background: #f5f5f5;
    border-radius: 2px;
    font-family: "Liberation Sans", sans-serif;
    font-variant: small-caps;
    font-size: 21px;
    line-height: 46px;
    text-align: center;
    color: #222;
}

.game-canvas {
    flex: 1;
    position: relative;
}

.units {
    position: absolute;
    right: 4px;
    top: 0;
    text-align: right;
    font-family: "Liberation Sans", sans-serif;
    font-size: 15.400px;
    line-height: 18.500px;
    color: #f4f4f4;
}

.dome {
    position: absolute;
    left: 62px;
    top: 128px;
    width: 85px;
    height: 86px;
    border-radius: 50%;
    background: #fff;
}

.open-btn {
    position: absolute;
    left: 318px;
    top: 258px;
    width: 82px;
    height: 76px;
    background: #f5f5f5;
    border-radius: 2px;
    font-family: "Liberation Sans", sans-serif;
    font-variant: small-caps;
    font-weight: 700;
    font-size: 17.500px;
    line-height: 19px;
    letter-spacing: .9px;
    text-align: center;
    color: #2a2a2a;
    padding-top: 9px;
}

/* project */
.project {
    flex: 1;
    display: flex;
    flex-direction: column;
    background: #383838;
}

.project-tabs {
    height: 17px;
}

.project-tab {
    width: 53px;
}

.console-tab {
    padding-left: 8px;
}

.project-bar {
    height: 14px;
    position: relative;
    border-bottom: 1px solid #262626;
}

.project-search {
    position: absolute;
    left: 637px;
    top: 1px;
    width: 199px;
    height: 11px;
    background: #2a2a2a;
    border-radius: 2px;
    padding: 3px 0 0 3px;
}

.project-search svg {
    width: 5px;
    height: 5px;
}

.project-tools {
    position: absolute;
    left: 838px;
    top: 1px;
    display: flex;
    align-items: center;
    gap: 7.700px;
}

.project-tools > svg {
    width: 9px;
    height: 9px;
}

.hidden-count {
    display: flex;
    align-items: center;
    gap: 1px;
    margin-left: 2px;
    color: #7c7c7c;
    font-size: 9px;
}

.hidden-count svg {
    width: 9px;
    height: 7px;
}

.project-body {
    flex: 1;
    display: flex;
    min-height: 0;
}

.folders {
    width: 139px;
    border-right: 1px solid #232323;
    background: #363636;
}

.folder-row {
    height: 11px;
    display: flex;
    align-items: center;
    padding-left: 3px;
    color: #b0b0b0;
    font-weight: 500;
}

.folder-row svg {
    width: 8px;
    height: 8px;
    margin: 0 3px 0 4px;
}

.folder-row.fav {
    margin-bottom: 9px;
}

.folder-row.on {
    background: #4a4a4a;
}

.assets {
    flex: 1;
    display: flex;
    flex-direction: column;
    min-width: 0;
}

.assets-head {
    height: 15px;
    padding: 1px 0 0 3px;
    background: #3e3e3e;
    color: #9c9c9c;
    font-weight: 500;
    line-height: 12px;
}

.assets-scroll {
    height: 185px;
    overflow: hidden;
    display: flex;
    position: relative;
}

.asset-list {
    flex: 1;
}

.asset-list li {
    height: 10.650px;
    display: flex;
    align-items: center;
    padding-left: 11px;
    color: #9e9e9e;
}

.asset-list li svg {
    width: 8px;
    height: 9px;
    margin-right: 3px;
}

.asset-list li.has-arrow {
    padding-left: 3px;
}

.asset-list li.has-arrow .arrow-right {
    margin-right: 3px;
}

.scrollbar {
    width: 7px;
    background: #2c2c2c;
    padding-top: 2px;
    margin-right: 1px;
}

.scroll-thumb {
    height: 119px;
    width: 5px;
    margin-left: 1px;
    background: #5a5a5a;
    border-radius: 2px;
}

.assets-foot {
    flex: 1;
    background: #3e3e3e;
    display: flex;
    align-items: center;
    padding-left: 761px;
}

.foot-knob {
    width: 7px;
    height: 7px;
    border-radius: 50%;
    background: #999;
}

.foot-track {
    width: 28px;
    height: 1px;
    background: #606060;
}

/* inspector */
.inspector {
    width: 331px;
    background: #383838;
    border-left: 1px solid #141414;
    display: flex;
    flex-direction: column;
    overflow: hidden;
    color: #a8a8a8;
}

.insp-tab {
    width: 62px;
}

.object-head {
    height: 40px;
    background: #3d3d3d;
    border-bottom: 1px solid #2a2a2a;
    display: flex;
    padding-left: 3px;
}

.object-icon {
    width: 14px;
    height: 14px;
    margin-top: 7px;
    color: #b4b4b4;
    position: relative;
}

.object-icon svg {
    width: 14px;
    height: 14px;
}

.object-icon .caret {
    position: absolute;
    left: 13px;
    top: 14px;
    border-left-width: 2.500px;
    border-right-width: 2.500px;
    border-top-width: 3px;
}

.object-rows {
    flex: 1;
    padding: 7px 0 0 12px;
}

.object-row {
    display: flex;
    align-items: center;
    height: 12px;
}

.check {
    width: 9px;
    height: 9px;
    background: #2c2c2c;
    border-radius: 1px;
    flex: none;
    display: block;
}

.check svg {
    width: 9px;
    height: 9px;
}

.field {
    display: flex;
    align-items: center;
    height: 12px;
    background: #2a2a2a;
    border-radius: 2px;
    padding-left: 3px;
    color: #a8a8a8;
    min-width: 0;
    position: relative;
}

.name-field {
    width: 234px;
    margin-left: 4px;
}

.static-check {
    margin-left: 3px;
}

.static-label {
    margin-left: 4px;
    color: #808080;
}

.object-row .caret {
    margin-left: 8px;
}

.tag-row {
    margin-top: 4px;
}

.tag-label {
    width: 17px;
    margin-left: -4px;
    color: #8c8c8c;
}

.drop {
    display: flex;
    align-items: center;
    justify-content: space-between;
    height: 11px;
    background: #515151;
    border-radius: 2px;
    padding: 0 3px;
    color: #b8b8b8;
    flex: none;
}

.drop .caret {
    margin-left: 0;
}

.tag-drop {
    width: 129px;
}

.layer-label {
    margin-left: 10px;
    width: 24px;
    color: #8c8c8c;
}

.layer-drop {
    width: 121px;
}

.comp-head {
    height: 14px;
    background: #3e3e3e;
    display: flex;
    align-items: center;
    padding-left: 3px;
    border-top: 1px solid #2a2a2a;
    position: relative;
}

.comp-head .arrow-down {
    margin-right: 4px;
}

.comp-head b {
    color: #b4b4b4;
    font-weight: 600;
    margin-left: 4px;
}

.comp-icon {
    width: 9px;
    height: 9px;
}

.script-icon {
    height: 10px;
}

.comp-head .check {
    margin-left: 3px;
}

.no-check {
    width: 9px;
    margin-left: 3px;
}

.comp-tools {
    position: absolute;
    right: 7px;
    top: 2px;
    display: flex;
    align-items: center;
    gap: 7px;
}

.comp-tools svg:not(.kebab) {
    width: 7.500px;
    height: 8px;
}

.comp-tools .kebab {
    width: 3px;
    height: 8px;
}

.row {
    height: 13px;
    display: flex;
    align-items: center;
    padding-left: 11px;
    position: relative;
}

.label {
    width: 125px;
    flex: none;
    white-space: nowrap;
    color: #a0a0a0;
}

.sub {
    padding-left: 12px;
}

.triple {
    margin-left: 122px;
    display: grid;
    grid-template-columns: 64px 63px 63px;
    gap: 2px;
    color: #888;
}

.triple .field {
    width: 63px;
}

.triple .field:last-child {
    width: 62px;
}

.rbtn-wrap {
    display: flex;
    justify-content: flex-end;
}

.rbtn {
    width: 17px;
    height: 11px;
    background: #555;
    padding: 1px 4px;
    font-style: normal;
    font-size: 7px;
    color: #7790aa;
    text-align: center;
}

.rbtn svg {
    width: 9px;
    height: 9px;
}

.rbtn-on {
    background: #3d5a7c;
    padding: 0;
    line-height: 11px;
}

.rect-body {
    height: 144px;
    padding-top: 5px;
}

.rect-body .row {
    height: 12px;
}

.rect-body .row-tall {
    height: 13px;
}

.rect-body .row-anchors {
    height: 11px;
    margin-top: 1px;
    padding-left: 4px;
    color: #a0a0a0;
}

.row-anchors .arrow-down {
    border-left-width: 2.500px;
    border-right-width: 2.500px;
    border-top-width: 4px;
    margin-right: 2px;
}

.indent {
    padding-left: 11px;
}

.row-pivot {
    margin-top: 3px;
}

.row-rotation {
    margin-top: 6px;
}

.pair {
    margin-left: -3px;
    display: grid;
    grid-template-columns: 8px 55px 3px 8px 55px;
    align-items: center;
}

.pair .axis:nth-child(3) {
    grid-column: 4;
}

.pair .field:nth-child(4) {
    grid-column: 5;
}

.trio {
    display: grid;
    grid-template-columns: 9px 51px 6px 8px 52px 3px 10px 51px;
    align-items: center;
}

.trio .axis:nth-child(3) {
    grid-column: 4;
}

.trio .field:nth-child(4) {
    grid-column: 5;
}

.trio .axis:nth-child(5) {
    grid-column: 7;
}

.trio .field:nth-child(6) {
    grid-column: 8;
}

.link {
    position: absolute;
    left: 120px;
    top: 4px;
    width: 9px;
    height: 6px;
}

.axis {
    color: #8a8a8a;
}

.prop .drop,
.prop .field {
    width: 190px;
}

.prop .obj {
    padding: 0 14px 0 2px;
}

.prop .narrow {
    width: 187px;
    margin-left: 2px;
}

.dim {
    color: #6f6f6f;
}

.target {
    position: absolute;
    right: 3px;
    top: 2px;
    width: 8px;
    height: 8px;
    color: #c0c0c0;
}

.field-icon {
    width: 6px;
    height: 7px;
    margin-right: 2px;
}

.prop .tmp-field {
    padding-left: 0;
}

.tmp-icon {
    width: 9px;
    height: 10px;
    margin-right: 2px;
}

.box-check {
    margin-left: 1px;
}

.canvas-body {
    height: 159px;
    padding-top: 2px;
}

.canvas-body .row {
    height: 13.500px;
}

.canvas-body .row-render {
    height: 14.500px;
}

.warning {
    display: flex;
    align-items: center;
    background: #414141;
    border: 1px solid #2e2e2e;
    border-radius: 2px;
    color: #8e8e8e;
    font-size: 6.750px;
    line-height: 8px;
}

.warning p {
    margin: 0;
}

.warning svg {
    width: 17px;
    height: 16px;
    margin: 0 3px;
}

.warning-sub {
    height: 24px;
    margin: 1px 5px 0 23px;
}

.warning-main {
    height: 24px;
    margin: 1px 4px 0 11px;
}

.row-sorting {
    margin-top: 6px;
}

.scaler-body {
    height: 54px;
    padding-top: 3px;
}

.row-dynamic {
    margin-top: 6px;
}

.disabled .label,
.disabled .drop,
.disabled .field {
    color: #686868;
}

.disabled .drop {
    background: #444;
}

.disabled .field {
    background: #333;
}

.disabled .target {
    color: #666;
}

.disabled .caret {
    border-top-color: #666;
}

.ray-body {
    height: 59px;
    padding-top: 2px;
}

.ray-body .row-short {
    height: 12px;
}

.ray-body .row-ignore {
    height: 14px;
}

.bar-body {
    height: 46px;
    padding-top: 3px;
    border-bottom: 1px solid #2a2a2a;
}

.add-comp-wrap {
    padding: 8px 0 0 89px;
}

.add-comp {
    width: 151px;
    height: 14px;
    background: #505050;
    border-radius: 2px;
    text-align: center;
    line-height: 14px;
    color: #a8a8a8;
}

/* status and taskbar */
.statusbar {
    height: 14px;
    background: #131313;
    display: flex;
    align-items: center;
    justify-content: flex-end;
    gap: 8px;
    padding-right: 5px;
}

.statusbar svg {
    width: 10px;
    height: 10px;
}

.taskbar {
    height: 32px;
    background: #eef0f2;
    display: flex;
    align-items: center;
    justify-content: space-between;
    font-family: "Liberation Sans", sans-serif;
    color: #222;
    font-size: 8.500px;
}

.task-left {
    display: flex;
    align-items: center;
    padding-left: 14px;
}

.win-logo {
    width: 16px;
    height: 16px;
}

.search-pill {
    width: 144px;
    height: 22px;
    margin-left: 9px;
    background: #fbfbfb;
    border-radius: 11px;
    display: flex;
    align-items: center;
    padding-left: 5px;
    color: #555;
    font-size: 9.500px;
}

.search-pill > svg:first-child {
    width: 10px;
    height: 10px;
    margin-right: 8px;
}

.search-art {
    width: 32px;
    height: 14px;
    margin-left: auto;
    margin-right: 1px;
}

.task-icons {
    display: flex;
    align-items: center;
}

.task-slot {
    width: 29.400px;
    height: 27px;
    display: flex;
    align-items: center;
    justify-content: center;
    position: relative;
}

.task-slot svg {
    width: 16px;
    height: 16px;
}

.task-view {
    margin-right: 3px;
}

.task-view svg {
    width: 13px;
    height: 13px;
}

.task-slot.active {
    background: #ecaab0;
    border-radius: 3px;
    border-bottom: 2px solid #b3202c;
    width: 27px;
    margin: 0 1px;
}

.task-slot.running::after {
    content: "";
    position: absolute;
    left: 13px;
    bottom: 1px;
    width: 3px;
    height: 1px;
    background: #777;
}

.task-slot.focused {
    background: #f9fafa;
    border-radius: 3px;
}

.task-slot.focused::after {
    content: "";
    position: absolute;
    left: 10px;
    bottom: 1px;
    width: 10px;
    height: 2px;
    background: #0a6fb5;
}

.task-right {
    display: flex;
    align-items: center;
    padding-right: 13px;
}

.weather {
    width: 15px;
    height: 15px;
    margin-right: 5px;
}

.weather-text,
.clock {
    display: flex;
    flex-direction: column;
    line-height: 11px;
    font-size: 8px;
}

.weather-text {
    width: 47px;
}

.muted {
    color: #666;
}

.clock {
    text-align: right;
    width: 40px;
    margin-left: 8px;
    color: #333;
}

.tray-up {
    width: 8px;
    height: 5px;
    margin-left: 41px;
}

.tray-mic {
    width: 8px;
    height: 12px;
    margin-left: 13px;
}

.tray-wifi {
    width: 9px;
    height: 8px;
    margin-left: 13px;
}

.tray-vol {
    width: 11px;
    height: 10px;
    margin-left: 6px;
}

.tray-batt {
    width: 13px;
    height: 8px;
    margin-left: 5px;
}
```
